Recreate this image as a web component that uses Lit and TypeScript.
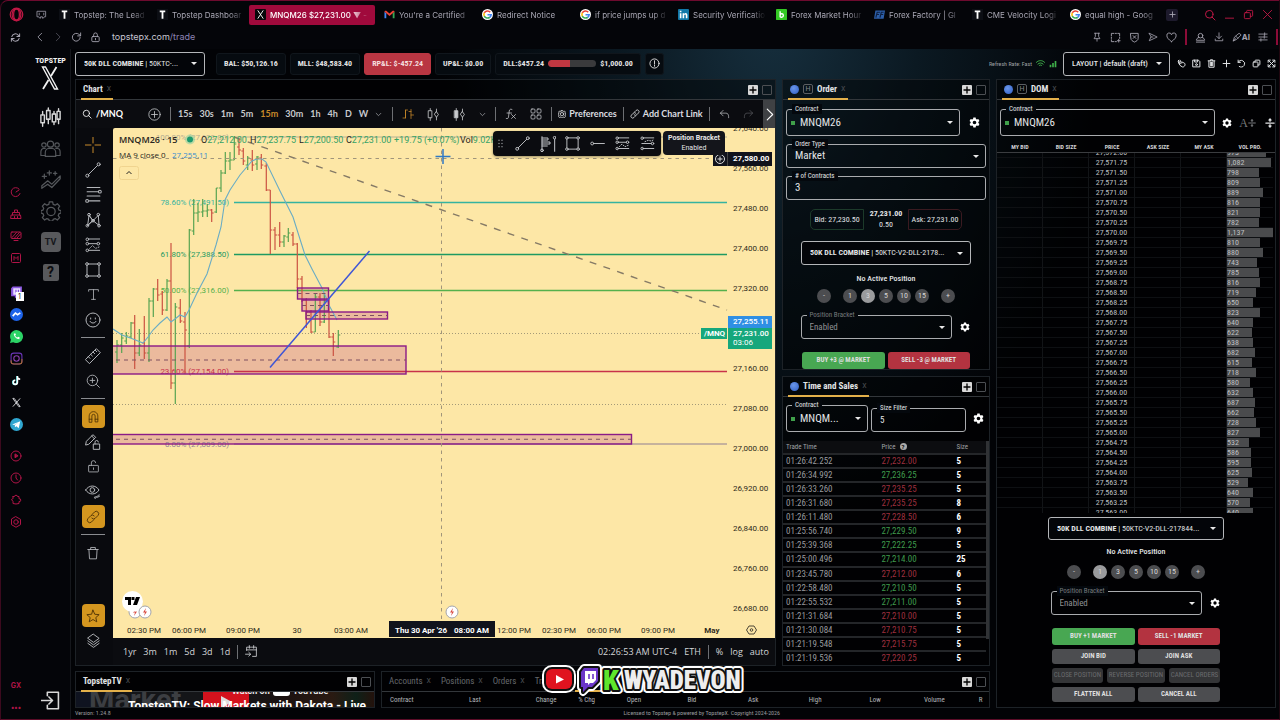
import { LitElement, html, svg, css, nothing, TemplateResult } from "lit";
import { customElement, state } from "lit/decorators.js";
import { classMap } from "lit/directives/class-map.js";

/* ---------- icon set, drawn on a 24 unit grid ---------- */
const ICONS: Record<string, any> = {
  opera: svg`<circle cx="12" cy="12" r="10"/><ellipse cx="12" cy="12" rx="4.6" ry="8.6"/><ellipse cx="12" cy="12" rx="7" ry="9.6"/>`,
  pad: svg`<path d="M3 5h18v12h-3l-2 3h-2v-3h-4v3H8l-2-3H3z"/><path d="M7 9v4M17 9v4"/>`,
  sync: svg`<path d="M4 10a8 8 0 0 1 14-3l3 3M21 4v6h-6M20 14a8 8 0 0 1-14 3l-3-3M3 20v-6h6"/>`,
  back: svg`<path d="M16 3 7 12l9 9"/>`,
  fwd: svg`<path d="m8 3 9 9-9 9"/>`,
  reload: svg`<path d="M20 12a8.5 8.5 0 1 1-3-7l4 3M21 2v6.500h-6.500"/>`,
  lock: svg`<rect x="4" y="10" width="16" height="11" rx="2"/><path d="M8 10V6a4 4 0 0 1 8 0v4M12 14v3"/>`,
  search: svg`<circle cx="10.500" cy="10.500" r="7.500"/><path d="m16 16 6 6"/>`,
  min: svg`<path d="M3 20h18"/>`,
  restore: svg`<rect x="3" y="8" width="13" height="13" rx="2"/><path d="M8 8V5a2 2 0 0 1 2-2h9a2 2 0 0 1 2 2v9a2 2 0 0 1-2 2h-3"/>`,
  close: svg`<path d="m3 3 18 18M21 3 3 21"/>`,
  plus: svg`<path d="M12 3v18M3 12h18"/>`,
  pin: svg`<path d="M6 3h12M8 3v8l-3 5h14l-3-5V3M12 16v6"/>`,
  snap: svg`<path d="M3 8V3h5M11 3h3M17 3h4v5M21 11v3M3 11v3M3 17v4h5M11 21h3M19 16v6M16 19h6"/>`,
  shield: svg`<path d="M4 3h16v11c0 4-4 6-8 8-4-2-8-4-8-8z"/><path d="m9 8 6 6M15 8l-6 6"/>`,
  send: svg`<path d="m3 3 19 9-19 9 4-9zM7 12h5"/>`,
  heart: svg`<path d="M12 21C5 16 2 12 2 8.500A5 5 0 0 1 12 6a5 5 0 0 1 10 2.500C22 12 19 16 12 21z"/>`,
  user: svg`<circle cx="12" cy="8" r="5"/><path d="M8 12c-3 1-5 3-5 6h18c0-3-2-5-5-6M3 22h18"/>`,
  download: svg`<path d="M12 2v13M6 10l6 6 6-6M3 17v4h18v-4"/>`,
  brush: svg`<path d="m3 21 3-9 11-9 5 4-10 10zM9 10l5 5M3 21l6-5"/>`,
  menu: svg`<path d="M2 5h20M2 12h20M2 19h20M16 2v6M7 16v6M15 9v6"/>`,
  gauge: svg`<path d="M20 15a9 9 0 1 1-2-9M12 12l6-4"/>`,
  broom: svg`<path d="M9 9V4h6v5M5 14V9h14v5M3 14h18l1 7H2zM9 17v4M15 17v4"/>`,
  screen: svg`<rect x="2" y="4" width="20" height="13" rx="2"/><path d="m4 15 9-10M9 16 19 5M14 16l7-8M8 21h8"/>`,
  mbox: svg`<rect x="3" y="3" width="18" height="18" rx="2"/><path d="M8 16V9l4 4 4-4v7"/>`,
  play: svg`<circle cx="12" cy="12" r="10"/><path d="M10 8.500v7l5.500-3.500z" fill="currentColor"/>`,
  clock: svg`<circle cx="12" cy="12" r="10"/><path d="M12 6v6l3 4"/>`,
  puzzle: svg`<path d="M6 5h3a3 2.500 0 0 1 6 0h3v4.500a3 2.800 0 1 1 0 5.500v4l-6 1-6-1v-4l-3-4 3-2z"/>`,
  hexgear: svg`<path d="m12 1.500 9 5.200v10.600l-9 5.200-9-5.200V6.700z"/><circle cx="12" cy="12" r="4.500"/>`,
  candles: svg`<rect x="1" y="9" width="4" height="9"/><path d="M3 5v4M3 18v4"/><rect x="7.500" y="4" width="4" height="10"/><path d="M9.500 1v3M9.500 14v5"/><rect x="14" y="8" width="4" height="9"/><path d="M16 5v3M16 17v3"/><rect x="19.500" y="5" width="3.500" height="9"/><path d="M21.200 2v3M21.200 14v5"/>`,
  people: svg`<circle cx="12" cy="7" r="3.500"/><path d="M6 21v-4c0-3 2-5 4-5h4c2 0 4 2 4 5v4z"/><circle cx="4.500" cy="8" r="2.500"/><path d="M6 12H4c-2 0-3 2-3 4v4h5M18 12h2c2 0 3 2 3 4v4h-5"/><circle cx="19.500" cy="8" r="2.500"/>`,
  trend: svg`<path d="m1 19 7-6 5 4L23 7v3.500L13 21l-5-4-7 5z"/><path d="M10 1v5M7.500 3.500h5M4 5v5M1.500 7.500h5M17 2v4M15 4h4"/>`,
  gear: svg`<path d="M10 1h4l.6 3 2.400 1 2.600-1.700 2.800 2.800L20.700 8.700l1 2.300 2.300.5v3l-2.300.6-1 2.400 1.700 2.500-2.800 2.800-2.600-1.700-2.400 1-.6 2H10l-.6-2-2.400-1-2.600 1.700-2.800-2.800L3.300 17.500l-1-2.400L0 14.500v-3l2.300-.5 1-2.300L1.600 6.100l2.800-2.800L7 5l2.400-1z"/><circle cx="12" cy="12.500" r="5"/>`,
  gearFill: svg`<path fill="currentColor" stroke="none" fill-rule="evenodd" d="M9.500 1h5l.7 3.200 2 1.200 3.100-1 2.500 4.300-2.400 2.200v2.300l2.400 2.200-2.500 4.300-3.100-1-2 1.200-.7 3.100h-5l-.7-3.100-2-1.200-3.100 1-2.500-4.300 2.400-2.200v-2.300L1.200 8.700l2.500-4.300 3.100 1 2-1.200zM12 8a4 4 0 1 0 0 8 4 4 0 0 0 0-8z"/>`,
  exit: svg`<path d="M8 6V1.500h14v21H8V18M0 12h14M10 7.500l4.500 4.500-4.500 4.500"/>`,
  addCircle: svg`<circle cx="12" cy="12" r="10.500"/><path d="M12 6.500v11M6.500 12h11"/>`,
  chevDown: svg`<path d="m4 8 8 8 8-8"/>`,
  bars: svg`<path d="M2 20h5V4h4M7 20V4M14 7h4M18 3v18M18 14h5"/>`,
  candle2: svg`<rect x="3" y="5" width="6" height="13"/><path d="M6 1v4M6 18v5"/><path d="m17.500 7 3.500 5-3.500 5-3.500-5zM17.500 2v5M17.500 17v5"/>`,
  candle3: svg`<rect x="3" y="5" width="6" height="13" fill="currentColor"/><path d="M6 1v4M6 18v5"/><path d="m17.500 7 3.500 5-3.500 5-3.500-5zM17.500 2v5M17.500 17v5"/>`,
  fx: svg`<path d="M14 3c-3-1.500-5-.5-5.500 3L7 18c-.5 3-2 4-4.500 3M4 10h9M13 13l8 8M21 13l-8 8"/>`,
  grid4: svg`<rect x="2" y="2" width="8" height="8" rx="2"/><rect x="14" y="2" width="8" height="8" rx="2"/><rect x="2" y="14" width="8" height="8" rx="2"/><rect x="14" y="14" width="8" height="8" rx="2"/>`,
  link: svg`<path d="m10.500 7.500 4-4a4.200 4.200 0 0 1 6 6l-4.500 4.500a4.200 4.200 0 0 1-6 0M13.500 16.500l-4 4a4.200 4.200 0 0 1-6-6L8 10a4.200 4.200 0 0 1 6 0"/>`,
  undo: svg`<path d="M9 3 3 9l6 6M3 9h12c4 0 6 3 6 8v2"/>`,
  redo: svg`<path d="m15 3 6 6-6 6M21 9H9c-4 0-6 3-6 8v2"/>`,
  info: svg`<circle cx="12" cy="12" r="10"/><path d="M12 6v7M12 15.500v2.500"/>`,
  wifi: svg`<path d="M1 9c6-6.500 16-6.500 22 0M5 13.500c4-4 10-4 14 0M9 17.500c2-2 4-2 6 0"/>`,
  signal: svg`<path fill="currentColor" stroke="none" d="M2 14h5v8H2zM9.500 9h5v13h-5zM17 3h5v19h-5z"/>`,
  hand: svg`<path d="M4 4l5 8M8 3l4 8M13 8l5 2c3 1 4 4 3 7s-4 5-7 4l-6-4-3-5M4 4 3 8l4 5"/>`,
  save: svg`<path d="M3 3h14l4 4v14H3z"/><path d="M7 3v5h8V3"/><circle cx="12" cy="15" r="2.500"/>`,
  trash: svg`<path d="M3 6h18M8 6V2.500h8V6M5 6l1 16h12l1-16"/>`,
  trash2: svg`<path d="M3 5h18M9 5V2h6v3M5 5v17h14V5M9 9v9M12 9v9M15 9v9"/>`,
  rotate: svg`<path d="M3 3v6h6M3 9a9 9 0 1 1 3 11"/>`,
  expand: svg`<path d="M3 9V3h6M21 9V3h-6M3 15v6h6M21 15v6h-6M4 4l16 16M20 4 4 20"/>`,
  cross: svg`<path d="M12 0v9M12 15v9M0 12h9M15 12h9"/>`,
  line: svg`<circle cx="3.500" cy="20.500" r="2.300"/><circle cx="20.500" cy="3.500" r="2.300"/><path d="M5.200 18.800 18.800 5.200"/>`,
  fib: svg`<path d="M3 2h18M3 8h16M3 14h18M6 21h15"/><circle cx="21" cy="8" r="2"/><circle cx="3" cy="21" r="2"/>`,
  xabcd: svg`<path d="M4 20 6 5l6 8 8-8 1 15-9-7zM6 5l6 8M4 20l8-7"/><circle cx="3.500" cy="20.500" r="2"/><circle cx="6" cy="4" r="2"/><circle cx="12" cy="13" r="2"/><circle cx="20" cy="4" r="2"/><circle cx="21" cy="20.500" r="2"/>`,
  pos: svg`<path d="M5 3h17M5 10h13M5 20h17"/><circle cx="3.500" cy="3.500" r="2"/><circle cx="3.500" cy="10" r="2"/><circle cx="20" cy="10" r="2"/><circle cx="3.500" cy="20" r="2"/><path stroke-dasharray="1.500 2.500" d="m7 17 4-4 5 4 5-2"/>`,
  pos2: svg`<path d="M5 3h17M3 12h15M5 20h17"/><circle cx="3.500" cy="3.500" r="2"/><circle cx="20" cy="12" r="2"/><circle cx="3.500" cy="20" r="2"/><path stroke-dasharray="1.500 2.500" d="m8 9 5-2 5 1 4-2"/>`,
  rect: svg`<path d="M5 3h14M5 21h14M3 5v14M21 5v14"/><circle cx="3" cy="3" r="2"/><circle cx="21" cy="3" r="2"/><circle cx="3" cy="21" r="2"/><circle cx="21" cy="21" r="2"/>`,
  text: svg`<path d="M3 6V3h18v3M12 3v18M8.500 21h7"/>`,
  smile: svg`<circle cx="12" cy="12" r="10.500"/><path d="M7.500 14c1.500 3.500 7.500 3.500 9 0M8.500 9v1.500M15.500 9v1.500"/>`,
  ruler: svg`<path d="M1 17 17 1l6 6L7 23zM5 13l2.500 2.500M8.500 9.500 11 12M12 6l2.500 2.500M15.500 3.500 17.500 5.500"/>`,
  zoom: svg`<circle cx="11" cy="11" r="9"/><path d="m18 18 5 5M11 7v8M7 11h8"/>`,
  magnet: svg`<path d="M4 22V11a8 8 0 0 1 16 0v11h-5V11a3 3 0 0 0-6 0v11zM4 17h5M15 17h5"/>`,
  penlock: svg`<path d="m1 16 1-5L12 1l4 4L6 15zM10 3l4 4"/><rect x="13" y="15" width="9" height="8"/><path d="M15 15v-2.500a2.500 2.500 0 0 1 5-.5"/>`,
  unlock: svg`<rect x="3" y="10" width="18" height="12" rx="1"/><path d="M8 10V5.500a4 4 0 0 1 8-.5M12 14.500v3"/>`,
  eye: svg`<path d="M1 9c5-8 15-8 20 0-5 8-15 8-20 0z"/><circle cx="11" cy="9" r="3.500"/><path d="m15 22 6-6M14 20l3-1M19 20l3-2"/>`,
  star: svg`<path d="m12 2 3 7 7.500.7-5.700 5 1.700 7.300L12 18l-6.500 4 1.700-7.300-5.700-5L9 9z"/>`,
  layers: svg`<path d="m12 2 9 6.500-9 6.500-9-6.500zM3 12.500l9 6.500 9-6.500M3 16.500l9 6.500 9-6.500"/>`,
  calendar: svg`<path d="M3 10V4h18v17h-7M3 9h18M8 1v5M16 1v5M1 17h9M7 13.500l3.500 3.500L7 20.500"/>`,
  chevR: svg`<path d="m6 2 10 10L6 22"/>`,
  hray: svg`<circle cx="3.500" cy="12" r="2.300"/><path d="M6 12h17"/>`,
  volp: svg`<path d="M3 1v20M3 3h9v3H3M3 9h12v3H3M3 15h8M22 5v18"/><circle cx="22" cy="2.500" r="2"/><circle cx="3" cy="21.500" r="2"/>`,
  drag: svg`<path d="M8 3v1M16 3v1M8 11.500v1M16 11.500v1M8 20v1M16 20v1" stroke-width="2.500"/>`,
  divide: svg`<path d="M2 12h20M12 2v6M12 16v6M9.500 5 12 2l2.500 3M9.500 19l2.500 3 2.500-3" stroke-width="3"/>`,
};

const icon = (name: string, size = 12, sw = 1.5) =>
  html`<svg class="ic" width=${size} height=${size} viewBox="0 0 24 24" fill="none" stroke="currentColor"
    stroke-width=${sw} stroke-linecap="round" stroke-linejoin="round" aria-hidden="true">${ICONS[name]}</svg>`;

/* ---------- coloured brand marks ---------- */
const LOGOS: Record<string, any> = {
  t: svg`<rect width="24" height="24" fill="#0c0e14"/><path d="M6 3h12v4h-4v14h-4V7H6z" fill="#fff"/>`,
  x: svg`<rect width="24" height="24" rx="2" fill="#07070a"/><path d="m6 3 12 18M18 3 6 21" stroke="#fff" stroke-width="2"/>`,
  gmail: svg`<path d="M1 20V6l4 3v11z" fill="#4285f4"/><path d="M19 20V9l4-3v14z" fill="#34a853"/><path d="M1 6c0-2 2-3 4-2l7 6 7-6c2-1 4 0 4 2l-11 9z" fill="#ea4335"/>`,
  google: svg`<circle cx="12" cy="12" r="12" fill="#fff"/><path d="M18 7a8 8 0 0 0-13 1.500" stroke="#ea4335" stroke-width="3.500" fill="none"/><path d="M5 8.500a8 8 0 0 0 0 7" stroke="#fbbc05" stroke-width="3.500" fill="none"/><path d="M5 15.500A8 8 0 0 0 17 18" stroke="#34a853" stroke-width="3.500" fill="none"/><path d="M17 18a8 8 0 0 0 3-5.500h-8" stroke="#4285f4" stroke-width="3.500" fill="none"/>`,
  linkedin: svg`<rect width="24" height="24" rx="2" fill="#1178a8"/><path d="M4 9h3.500v11H4zM4 4h3.500v3H4zM10 9h3.500v2c2-3.500 7-2.500 7 2.500V20H17v-6c0-3-3.500-2.500-3.500 0v6H10z" fill="#fff"/>`,
  b: svg`<rect width="24" height="24" rx="1" fill="#34c924"/><path d="M9 5v13M9 12c2-3 7-2 7 2s-5 5-7 3" stroke="#fff" stroke-width="3" fill="none"/>`,
  ff: svg`<path d="M3 3h21l-3 18H0z" fill="#2c5ea8"/><path d="M4 19 7 7h6M6 12h5M13 19l3-12h5M15 12h5" stroke="#0e2142" stroke-width="2.500" fill="none"/>`,
  twitch: svg`<path d="M2 4 5 1h17v13l-5 5h-4l-4 4v-4H2z" fill="#8c5ae0"/><path d="M6 4h13v9l-3 3H6z" fill="#e8ddff"/><path d="M11 7v5M15.500 7v5" stroke="#7a42d8" stroke-width="2"/>`,
  messenger: svg`<circle cx="12" cy="12" r="12" fill="#1e63e9"/><path d="m5 15 5-5.500 4 3L19 9" stroke="#fff" stroke-width="3" fill="none"/>`,
  whatsapp: svg`<path d="M12 0a12 12 0 1 1-6 22.400L0 24l1.700-6A12 12 0 0 1 12 0z" fill="#2bd366"/><path d="M7 7c0 5 5 10 10 10l1-3-3-1.500-1.500 1.500c-2-1-3-2-4-4L11 8.500 9.500 6z" fill="#fff"/>`,
  insta: svg`<rect x="2" y="2" width="20" height="20" rx="5" fill="none" stroke="#6a35b8" stroke-width="2"/><path d="M2 15v2a5 5 0 0 0 5 5h10a5 5 0 0 0 5-5v-4" fill="none" stroke="#a86a2c" stroke-width="2"/><circle cx="12" cy="12" r="5" fill="none" stroke="#8c3fb0" stroke-width="2"/>`,
  tiktok: svg`<path d="M13 2v14a4.500 4.500 0 1 1-4.500-4.500" stroke="#3ce0e0" stroke-width="3.500" fill="none"/><path d="M14 2v14a4.500 4.500 0 1 1-4.500-4.500M14 3c0 4 3 6 6 6" stroke="#fff" stroke-width="3.500" fill="none"/>`,
  xs: svg`<path d="m4 3 13 18h3L7 3zM20 3 4 21" stroke="#d5d7da" stroke-width="2" fill="none"/>`,
  telegram: svg`<circle cx="12" cy="12" r="12" fill="#2fa6d0"/><path d="m4 12 15-6-3 13-4-4-3 2v-4l7-5-8 5z" fill="#fff"/>`,
};
const logo = (name: string, size = 11) =>
  html`<svg class="ic" width=${size} height=${size} viewBox="0 0 24 24" aria-hidden="true">${LOGOS[name]}</svg>`;

/* ---------- data ---------- */
const TABS: [string, string][] = [
  ["t", "Topstep: The Lead"], ["t", "Topstep Dashboar"], ["x", "MNQM26 $27,231.00 ▼ -"],
  ["gmail", "You're a Certified"], ["google", "Redirect Notice"], ["google", "if price jumps up d"],
  ["linkedin", "Security Verificatio"], ["b", "Forex Market Hour"], ["ff", "Forex Factory | Gl"],
  ["t", "CME Velocity Logi"], ["google", "equal high - Goog"],
];

const TRADES: [string, string, number, boolean][] = [
  ["01:26:42.252", "27,232.00", 5, false], ["01:26:34.992", "27,236.25", 5, true],
  ["01:26:33.260", "27,235.25", 5, false], ["01:26:31.680", "27,235.25", 8, false],
  ["01:26:11.480", "27,228.50", 6, false], ["01:25:56.740", "27,229.50", 9, true],
  ["01:25:39.368", "27,222.25", 5, true], ["01:25:00.496", "27,214.00", 25, true],
  ["01:23:45.780", "27,212.00", 6, false], ["01:22:58.480", "27,210.50", 5, true],
  ["01:22:55.532", "27,211.00", 5, true], ["01:21:31.684", "27,210.00", 5, false],
  ["01:21:30.084", "27,210.75", 5, false], ["01:21:19.548", "27,215.75", 5, false],
  ["01:21:19.536", "27,220.25", 5, false],
];

const VOLUMES = [973, 1082, 798, 809, 889, 816, 821, 782, 1137, 810, 880, 743, 785, 816, 719, 650, 823, 640, 622,
  638, 682, 615, 718, 580, 632, 687, 662, 728, 827, 532, 586, 595, 625, 529, 640, 570, 640];
const fmt = (n: number, d = 0) => n.toLocaleString("en-US", { minimumFractionDigits: d, maximumFractionDigits: d });

const QUOTE_COLS: [string, number][] = [["Contract", 13], ["Last", 11], ["Change", 7], ["% Chg", 8], ["Open", 10],
  ["Bid", 10], ["Ask", 10], ["High", 10], ["Low", 9], ["Volume", 9], ["R", 3]];

/* x, high, low, open, close in plot units; y grows downward */
const BARS: number[][] = [
  [117, 340, 363, 352, 345], [121.7, 333, 353, 345, 338], [126.3, 332, 344, 341, 336], [131, 322, 338, 337, 323],
  [134.7, 315, 369, 323, 353], [139.3, 329, 356, 353, 345], [144.3, 316, 359, 343, 353], [149, 298, 362, 353, 301],
  [153.3, 288, 317, 301, 289], [157.7, 279, 301, 289, 295], [162.3, 291, 315, 294, 310], [167, 279, 311, 310, 281],
  [171, 243, 389, 281, 383], [175.3, 303, 404, 383, 307], [180.3, 299, 323, 308, 321], [185, 312, 373, 322, 330],
  [189.3, 229, 348, 346, 230], [193.7, 199, 235, 231, 213], [198, 203, 222, 213, 212], [202.7, 199, 217, 212, 211],
  [207.3, 204, 217, 211, 210], [211.7, 209, 222, 210, 213], [216.3, 188, 213, 212, 188], [221, 170, 192, 188, 173],
  [225.3, 152, 174, 173, 161], [230, 152, 170, 161, 160], [234.3, 136, 160, 160, 144], [239, 139, 155, 147, 150],
  [243.3, 148, 165, 151, 161], [247.7, 156, 170, 165, 158], [252.3, 150, 171, 160, 165], [257, 156, 170, 164, 157],
  [261.3, 154, 169, 158, 165], [266.3, 163, 191, 166, 190], [270.3, 190, 254, 190, 230], [275, 227, 250, 230, 235],
  [279.7, 222, 247, 235, 242], [284, 235, 247, 242, 236], [288.3, 228, 242, 237, 233], [293, 232, 246, 235, 244],
  [297.3, 243, 288, 244, 279], [302, 276, 302, 279, 300], [306.3, 298, 328, 300, 312], [311, 310, 333, 312, 332],
  [315.3, 294, 332, 332, 297], [320, 293, 326, 297, 322], [324.3, 293, 323, 322, 301], [329, 298, 338, 301, 337],
  [333.3, 333, 356, 337, 342], [338.3, 330, 348, 347, 335],
];

const MA = "113,329 122,335 133,339 143,343 148,337 153,330 160,323 167,317 171,322 175,319 180,315 185,317 189,310 197,293 207,274 216,245 221,227 225,200 230,190 240,175 252,161 257,159 262,159 266,162 280,191 293,217 305,255 312,269 322,288 330,307 337,320";

@customElement("app-root")
export class AppRoot extends LitElement {
  @state() private orderQty = 3;
  @state() private domQty = 1;

  static styles = css`
    :host { display: block; height: 100vh; overflow: hidden; --cond: "Roboto Condensed", "Liberation Sans Narrow", Roboto, sans-serif;
      font-family: var(--cond); font-size: 9px; line-height: 12px; color: #e2e4e6; background: #040509; }
    * { box-sizing: border-box; }
    button, select, input { font: inherit; color: inherit; background: none; border: 0; padding: 0; margin: 0; }
    select { appearance: none; outline: none; min-width: 0; }
    option { color: #000; }
    input { outline: none; min-width: 0; width: 100%; }
    a { color: inherit; text-decoration: none; }
    .ic { display: block; flex: none; }
    .grow { flex: 1; min-width: 0; }
    .window { height: 100%; display: grid; grid-template-rows: 26px 22px minmax(0, 1fr); border: 1px solid #5c0c28; border-top-color: #6d0a2e; border-left-color: #3c0a1e; border-right-color: #20060f; border-radius: 8px 0 0 0; position: relative; }

    /* browser chrome */
    .tabs { display: flex; align-items: center; font: 8px/12px Inter, sans-serif; color: #a9a7b4; padding-top: 1px; }
    .home { width: 52px; flex: none; display: flex; align-items: center; gap: 12px; padding-left: 8px; color: #c01845; }
    .home .pad { color: #8d8b98; }
    .tab { flex: 0 1 98px; min-width: 0; height: 20px; display: flex; align-items: center; gap: 4px; padding: 0 1px 0 6px; overflow: hidden; font-size: 8px; line-height: 12px; }
    .tab span { white-space: nowrap; overflow: hidden; flex: 1; text-align: left; mask-image: linear-gradient(90deg, #000 76%, transparent 96%); }
    .tab.on { flex-basis: 126px; margin-right: 3px; background: #a00a3c; color: #fff; border-radius: 2px; font-weight: 500; }
    .newtab { width: 12px; height: 12px; margin-left: 4px; background: #1d1a2c; border-radius: 2px; display: grid; place-items: center; }
    .wins { margin-left: auto; display: flex; gap: 8px; padding-right: 6px; color: #c01845; }
    .addr { display: flex; align-items: center; color: #a4a2ae; font: 9px/12px Inter, sans-serif; padding-right: 1px; padding-bottom: 2px; }
    .nav { display: flex; gap: 8px; padding-left: 9px; align-items: center; }
    .nav button:first-child { margin-right: 6px; }
    .nav .dim { color: #56545f; }
    .url { margin-left: 11px; color: #c7c5d2; }
    .url i { font-style: normal; color: #8c83b4; }
    .tools { margin-left: auto; display: flex; align-items: center; gap: 8px; }
    .bar { width: 2px; height: 16px; background: #8c0c38; }
    .ai { display: flex; align-items: center; font-weight: 700; font-size: 8px; }

    .shell { display: grid; grid-template-columns: 30px 40px minmax(0, 1fr); min-height: 0; }
    .gx { display: flex; flex-direction: column; align-items: center; padding-top: 132px; color: #b01447; }
    .gx button { height: 22px; display: grid; place-items: center; position: relative; }
    .gx .first { margin-top: 12px; }
    .gx .second { margin-top: 10px; }
    .gx .gap { flex: 1; }
    .gx b { font: 700 7px/10px Inter, sans-serif; }
    .badge { position: absolute; left: 6px; top: 11px; width: 8px; height: 9px; background: #fff; color: #222; font: 7px/9px Inter, sans-serif; }
    .appnav { display: flex; flex-direction: column; align-items: center; border-right: 1px solid #15171c; color: #55585c; padding: 6px 0 6px 0; }
    .appnav .brand { color: #f2f2f2; font: 700 8px/11px var(--cond); text-align: center; margin-bottom: 12px; }
    .appnav .brand svg { display: block; margin: 0 auto; }
    .appnav button { height: 31px; display: grid; place-items: center; }
    .appnav .lit { color: #d8d8d8; }
    .appnav .tv { width: 20px; height: 20px; border-radius: 4px; background: #58595c; color: #15161a; font: 700 9px/20px Roboto, sans-serif; margin: 6px 0 5px; }
    .appnav .help { width: 16px; height: 17px; border-radius: 2px; background: #58595c; color: #0c0d10; font: 700 14px/17px Roboto, sans-serif; margin-top: 7px; }
    .appnav .out { margin-top: auto; color: #d8d8d8; height: 26px; }

    .page { min-width: 0; min-height: 0; display: grid; grid-template-rows: 30px minmax(0, 1fr) 11px; padding: 0 3px 0 4px;
      background: radial-gradient(ellipse 330px 520px at 58% -6%, #17303f 0%, #0b1922 45%, transparent 100%), #020306; }
    .head { display: flex; align-items: center; gap: 4px; font-weight: 700; font-size: 8px; padding-bottom: 1px; }
    .pick { display: grid; align-items: center; border: 1px solid #b4b6b9; border-radius: 3px; height: 24px; background: #030509; min-width: 0; font-size: 8px; }
    .pick > * { grid-area: 1 / 1; min-width: 0; }
    .pick select { opacity: 0; width: 100%; height: 100%; cursor: pointer; }
    .pick .face { display: flex; align-items: center; padding: 0 7px 0 8px; gap: 4px; }
    .pick .name { flex: 1; min-width: 0; overflow: hidden; white-space: nowrap; text-overflow: ellipsis; font-weight: 400; }
    .pick.lay b, .pick.lay .name { font-weight: 500; }
    .pick b { font-weight: 700; }
    .caret { width: 0; height: 0; border: 3px solid transparent; border-top-color: #e8e8e8; border-bottom: 0; flex: none; pointer-events: none; }
    .head .acct { width: 130px; margin-right: 7px; }
    .head .lay { width: 107px; margin: 0 3px 0 2px; }
    .chip { height: 22px; display: flex; align-items: center; justify-content: center; border-radius: 3px; background: #060b10; border: 1px solid #10161c; padding: 0 7px; gap: 4px; white-space: nowrap; color: #e4e4e4; }
    .chip.loss { background: #b93642; border-color: #b93642; color: #f4dede; }
    .chip.round { padding: 0 3px; }
    .meter { width: 48px; height: 7px; border-radius: 4px; background: #3a3a3c; overflow: hidden; }
    .meter i { display: block; height: 100%; background: #c03741; border-radius: 4px 0 0 4px; }
    .refresh { margin-left: auto; font-weight: 400; font-size: 6px; color: #9fa1a4; }
    .green { color: #3fb04a; }
    .acts { display: flex; gap: 6px; }
    .acts button { display: block; }

    .work { display: grid; grid-template-columns: minmax(0, 1fr) 280px; gap: 6px; min-height: 0; }
    .left { display: grid; grid-template-rows: minmax(0, 1fr) 37px; gap: 5px; min-height: 0; min-width: 0; }
    .upper { display: grid; grid-template-columns: minmax(0, 1fr) 208px; gap: 6px; min-height: 0; }
    .lower { display: grid; grid-template-columns: 300px minmax(0, 1fr); gap: 6px; min-height: 0; }
    .side { display: grid; grid-template-rows: 291px minmax(0, 1fr); gap: 6px; min-height: 0; }
    .panel { border: 1px solid #1d2227; min-width: 0; min-height: 0; overflow: hidden; display: flex; flex-direction: column; background: rgba(0, 0, 0, 0.45); }
    .ptabs { height: 20px; flex: none; display: flex; align-items: stretch; border-bottom: 1px solid #33373b; padding: 0 3px 0 5px; gap: 4px; }
    .ptab { display: flex; align-items: center; gap: 4px; font-weight: 700; font-size: 9px; padding: 0 2px; border-bottom: 2px solid #e3b04a; margin-bottom: -1px; white-space: nowrap; }
    .ptab i { font-style: normal; font-weight: 400; font-size: 8px; color: #4b4e52; }
    .ptab .ball { width: 9px; height: 9px; border-radius: 50%; background: radial-gradient(circle at 40% 35%, #6a96ea, #2f5ec4); }
    .ptab .h { width: 10px; height: 10px; border: 1px solid #5c5f63; border-radius: 2px; font: 7px/8px Roboto, sans-serif; color: #85888c; text-align: center; }
    .ptab.off { color: #64676b; font-weight: 400; border-color: transparent; margin-right: 2px; }
    .pbtn { align-self: center; width: 10px; height: 10px; border-radius: 1px; display: grid; place-items: center; background: #d8d8d8; color: #000; }
    .pbtn.sq { background: none; border: 1px solid #4c4f53; }

    /* chart */
    .ctools { height: 28px; flex: none; display: flex; align-items: center; background: #0b0c10; font: 9px/12px Lato, "Open Sans", sans-serif; color: #c8cacd; padding-left: 6px; overflow: hidden; white-space: nowrap; }
    .sym { display: flex; align-items: center; gap: 4px; width: 66px; flex: none; font-weight: 700; color: #fff; }
    .sep { width: 1px; height: 14px; background: #6d6f73; flex: none; }
    .lead { margin-left: 9px; }
    .tf { display: flex; gap: 7px; align-items: center; padding: 0 10px 0 7px; font-weight: 700; flex: none; }
    .tf .on { color: #c98a2a; }
    .amber { color: #c98a2a; }
    .faint { color: #5a5c60; }
    .grp { display: flex; gap: 13px; align-items: center; padding: 0 9px; flex: none; }
    .lab { display: flex; gap: 3px; align-items: center; padding: 0 6px; font-weight: 700; color: #dcdde0; flex: none; }
    .more { margin-left: auto; align-self: stretch; width: 15px; flex: none; background: #3f4144; display: grid; place-items: center; color: #fff; }
    .cbody { flex: 1; min-height: 0; display: grid; grid-template: minmax(0, 1fr) 27px / 37px minmax(0, 1fr); background: #090a0e; }
    .draw { grid-row: 1 / 3; display: flex; flex-direction: column; align-items: center; padding: 4px 3px 12px 0; color: #b4b6ba; min-height: 0; }
    .draw button { height: 25px; width: 25px; flex: none; display: grid; place-items: center; }
    .draw hr { width: 24px; height: 1px; margin: 5px 0; border: 0; background: #8a8c90; flex: none; }
    .draw .hot { height: 23px; width: 23px; margin: 1px; border-radius: 4px; background: #d4961f; color: #4a2f05; }
    .draw .fav { margin-top: auto; }
    .plot { position: relative; background: #fde7a6; min-width: 0; min-height: 0; overflow: hidden; border-radius: 2px 0 0 0; }
    .plot > svg { display: block; width: 100%; height: 100%; }
    .float { position: absolute; top: 3px; right: 114px; width: 168px; height: 25px; border-radius: 4px; background: #0b0c10; display: flex; align-items: center; justify-content: space-between; padding: 0 6px 0 3px; color: #c2c4c8; box-shadow: 0 1px 3px rgba(0, 0, 0, 0.4); }
    .tip { position: absolute; top: 3px; right: 50px; width: 62px; height: 24px; border-radius: 4px; background: #14151b; color: #e6e6e8; text-align: center; font: 7px/10px Roboto, sans-serif; padding-top: 2px; }
    .tip b { display: block; }
    .axis { font: 8px Roboto, sans-serif; fill: #2e2a20; }
    .legend { font: 9px "Open Sans", sans-serif; fill: #272420; }
    .legend .val { font: 9px Roboto, sans-serif; }
    .legend .up { fill: #35a266; }
    .fib { font: 8px Roboto, sans-serif; text-anchor: end; }
    .cfoot { min-width: 0; display: flex; align-items: center; gap: 7px; padding: 0 6px 0 10px; background: #0b0c10; font: 9px/12px "Open Sans", sans-serif; color: #d4d6d9; white-space: nowrap; }
    .cfoot .clk { margin-left: auto; }

    /* fields */
    .field { position: relative; border: 1px solid #a9abae; border-radius: 3px; height: 27px; display: flex; align-items: center; gap: 5px; padding: 0 6px 0 8px; min-width: 0; }
    .field > label { position: absolute; top: -6px; left: 5px; padding: 0 3px; background: #04080d; font-size: 7px; line-height: 10px; font-weight: 400; }
    .field select, .field input { flex: 1; font-size: 11px; line-height: 16px; }
    .field.sym2 { padding-left: 4px; }
    .field .dot { width: 4px; height: 4px; background: #3fa04a; flex: none; }
    .field.dim { color: #8f9194; height: 24px; }
    .field.dim select { font-size: 9px; }
    .field.dim > label { color: #77797c; }
    .form { padding: 9px 3px 0; display: flex; flex-direction: column; gap: 8px; flex: 1; min-height: 0; }
    .row { display: flex; align-items: center; gap: 9px; padding-right: 6px; }
    .row .field { flex: 1; }
    .gearb { color: #fff; }
    .quote { display: grid; grid-template-columns: 54px 38px 54px; justify-content: center; gap: 3px; align-items: center; text-align: center; font-size: 8px; }
    .quote div { line-height: 11px; }
    .quote .bid { height: 21px; line-height: 19px; border: 1px solid #1c3a2a; border-radius: 5px 0 0 5px; white-space: nowrap; }
    .quote .ask { height: 21px; line-height: 19px; border: 1px solid #3a1a20; border-radius: 0 5px 5px 0; white-space: nowrap; }
    .pos { display: flex; flex-direction: column; align-items: center; }
    .form .pos { padding-top: 3px; }
    .pos .pick { width: 170px; }
    .pos .none { margin: 8px 0 4px; font-size: 8px; font-weight: 500; }
    .qty { display: flex; gap: 4px; padding-bottom: 1px; }
    .qty button { width: 14px; height: 14px; border-radius: 50%; background: #4c4d50; color: #d6d6d6; font-size: 8px; line-height: 14px; text-align: center; }
    .qty button.on { background: #9a9b9d; }
    .qty button:first-child { margin-right: 8px; }
    .qty button:last-child { margin-left: 8px; }
    .brk { display: flex; align-items: center; gap: 8px; margin-top: 11px; width: 171px; }
    .brk .field { width: 151px; flex: none; }
    .duo { display: grid; grid-template-columns: 1fr 1fr; gap: 3px; width: 168px; }
    .duo.top { margin-top: 13px; }
    .tri { display: grid; grid-template-columns: 51px 58px 51px; gap: 4px; width: 168px; }
    .btn { height: 17px; border-radius: 3px; background: #4c4d50; font-size: 7px; font-weight: 700; line-height: 17px; text-align: center; color: #dedede; white-space: nowrap; overflow: hidden; }
    .btn.buy { background: #48a752; }
    .btn.sell { background: #b33340; }
    .btn.thin { height: 15px; line-height: 15px; }
    .btn:disabled { background: #343537; color: #6a6b6e; font-weight: 400; font-size: 7px; }

    /* time and sales */
    .filters { display: grid; grid-template-columns: 82px minmax(0, 1fr) 18px; gap: 3px; align-items: end; padding: 8px 2px 9px 3px; }
    .filters .short { height: 24px; }
    .filters .short input { font-size: 9px; }
    .filters .gearb { align-self: center; justify-self: center; }
    .tape { flex: 1; min-height: 0; display: grid; grid-template-columns: minmax(0, 1fr) 3px; }
    .tape table { width: 100%; border-collapse: collapse; table-layout: fixed; }
    .tape th { text-align: left; font-weight: 400; font-size: 7px; line-height: 12px; color: #9fa1a4; background: #0c0d10; padding: 0 0 0 3px; height: 13px; }
    .tape td { height: 14px; padding: 0 0 0 3px; line-height: 12px; font-size: 9px; color: #989a9d; border-top: 2px solid #242629; }
    .tape td.s { color: #fff; font-weight: 700; }
    .tape td.up { color: #3f9a4c; }
    .tape td.dn { color: #9d2f3e; }
    .tape .q { display: inline-block; width: 7px; height: 7px; border-radius: 50%; background: #aaa; color: #000; font: 700 6px/7px Roboto, sans-serif; text-align: center; margin-left: 4px; }
    .thumb { background: #303235; height: 198px; }
    .c-time { width: 47%; }
    .c-price { width: 37%; }

    /* depth ladder */
    .domtop { display: flex; align-items: center; padding: 9px 0 0 3px; }
    .domtop .field { flex: 1; }
    .domtop .gearb { margin: 0 7px; }
    .domtop .aa { display: flex; align-items: center; font: 12px/14px "Liberation Serif", serif; color: #77797c; margin-right: 9px; }
    .ladder { flex: 1; min-height: 0; display: flex; flex-direction: column; margin-top: 6px; }
    .ladder tr { display: grid; grid-template-columns: repeat(6, minmax(0, 1fr)); flex: none; padding-right: 2px; }
    .ladder thead { flex: none; border-bottom: 1px solid #3b3d40; padding: 0; }
    .ladder th { font-size: 6px; line-height: 10px; font-weight: 700; padding: 0; color: #cfd0d2; text-align: center; }
    .ladder tbody { flex: 1; min-height: 0; overflow: hidden; display: flex; flex-direction: column; justify-content: center; }
    .ladder td { height: 10px; line-height: 9px; font-size: 8px; padding: 0; text-align: center; color: #bfc0c3; border-right: 1px solid #121417; border-bottom: 1px solid #0e1013; }
    .ladder td:last-child { text-align: left; border-right: 0; display: grid; }
    .ladder td:last-child > * { grid-area: 1 / 1; }
    .ladder td b { display: block; height: 9px; background: #4a4b4d; }
    .domfoot { flex: none; padding: 4px 0 5px; }
    .domfoot .pick { width: 176px; height: 23px; }
    .domfoot .none { margin: 6px 0 7px; }
    .domfoot .stack { display: flex; flex-direction: column; gap: 4px; }

    /* bottom panels */
    .video { flex: 1; min-height: 0; position: relative; overflow: hidden; background: linear-gradient(90deg, #0f1320 0 14px, #141518 14px 55%, #1c1210 70%, #2a1a12 86%, #0e2018 94%, #24120c); }
    .video .ghost { position: absolute; left: 13px; top: -6px; font: 700 29px/29px Roboto, sans-serif; color: #3c3e42; }
    .video .yt { position: absolute; left: 127px; top: -2px; width: 46px; height: 24px; background: #d3121d; }
    .video .yt svg { display: block; margin: 5px auto; }
    .video .watch { position: absolute; left: 156px; top: -6px; font: 700 9px/10px Roboto, sans-serif; color: #e6e6e6; white-space: nowrap; }
    .video .watch em { display: inline-block; width: 17px; height: 10px; border-radius: 3px; background: #fff; vertical-align: top; margin: 0 3px; }
    .video .title { position: absolute; left: 52px; top: 8px; right: 4px; font: 700 12px/13px Roboto, sans-serif; color: #fff; white-space: nowrap; overflow: hidden; }
    .acc { width: 100%; border-collapse: collapse; table-layout: fixed; }
    .acc th { font-size: 7px; line-height: 16px; font-weight: 400; color: #b4b6b9; text-align: left; padding: 0 0 0 8px; white-space: nowrap; overflow: hidden; }
    .foot { display: flex; justify-content: space-between; font-size: 6px; line-height: 10px; color: #9a9c9f; padding-right: 496px; }
    .stream { position: absolute; left: 536px; bottom: 22px; pointer-events: none; }
    .stream text { font: 900 25px "Roboto Condensed", "Liberation Sans Narrow", Roboto, sans-serif; }
    .stream .big { font-size: 28px; }
  `;

  private caret() { return html`<span class="caret"></span>`; }

  private pick(cls: string, label: string, bold: string, rest: string) {
    return html`<label class="pick ${cls}">
      <span class="face"><span class="name"><b>${bold}</b> | ${rest}</span>${this.caret()}</span>
      <select aria-label=${label}><option>${bold} | ${rest}</option></select>
    </label>`;
  }

  private selectField(id: string, label: string, value: string, cls = "", dot = false) {
    return html`<div class="field ${cls}">
      <label for=${id}>${label}</label>
      ${dot ? html`<span class="dot"></span>` : nothing}
      <select id=${id}><option>${value}</option></select>${this.caret()}
    </div>`;
  }

  private panelTabs(tabs: TemplateResult) {
    return html`<div class="ptabs">${tabs}<span class="grow"></span>
      <button class="pbtn" aria-label="Add tab">${icon("plus", 8, 4)}</button>
      <button class="pbtn sq" aria-label="Maximize"></button></div>`;
  }

  private qty(values: number[], current: number, set: (n: number) => void) {
    return html`<div class="qty"><button @click=${() => set(Math.max(1, current - 1))}>-</button>
      ${values.map((v) => html`<button class=${classMap({ on: v === current })} @click=${() => set(v)}>${v}</button>`)}
      <button @click=${() => set(current + 1)}>+</button></div>`;
  }

  private chrome() {
    return html`
      <div class="tabs">
        <div class="home">${icon("opera", 15, 2)}<span class="pad">${icon("pad", 11, 2)}</span></div>
        ${TABS.map(([l, t], i) => html`<button class=${classMap({ tab: true, on: i === 2 })}>${logo(l)}<span>${t}</span></button>`)}
        <button class="newtab" aria-label="New tab">${icon("plus", 7, 3)}</button>
        <div class="wins">${icon("search", 12, 2)}${icon("min", 11, 2)}${icon("restore", 11, 2)}${icon("close", 11, 2)}</div>
      </div>
      <div class="addr">
        <div class="nav">
          <button aria-label="Sync">${icon("sync", 11, 2.2)}</button><button aria-label="Back">${icon("back", 10, 2)}</button>
          <button class="dim" aria-label="Forward">${icon("fwd", 10, 2)}</button><button aria-label="Reload">${icon("reload", 11, 2)}</button>
          ${icon("lock", 11, 2)}
        </div>
        <span class="url">topstepx.com<i>/trade</i></span>
        <div class="tools">
          ${icon("pin", 10, 2)}${icon("snap", 11, 2)}${icon("shield", 11, 2)}${icon("send", 10, 2)}${icon("heart", 11, 2)}
          <span class="bar"></span>${icon("user", 11, 2)}${icon("download", 10, 2)}
          <span class="ai">${icon("brush", 10, 2)}AI</span>${icon("menu", 10, 2)}<span class="bar"></span>
        </div>
      </div>`;
  }

  private gxBar() {
    return html`<nav class="gx">
      ${["gauge", "broom", "screen", "mbox"].map((n) => html`<button aria-label=${n}>${icon(n, 12, 2)}</button>`)}
      ${["twitch", "messenger", "whatsapp", "insta", "tiktok", "xs", "telegram"].map((n, i) => html`
        <button class=${i ? "" : "first"} aria-label=${n}>${logo(n, n === "xs" || n === "tiktok" ? 11 : 13)}${i ? nothing : html`<span class="badge">1</span>`}</button>`)}
      ${["play", "clock", "puzzle", "hexgear"].map((n, i) => html`<button class=${i ? "" : "second"} aria-label=${n}>${icon(n, 12, 2)}</button>`)}
      <span class="gap"></span><button><b>GX</b></button><button><b>•••</b></button>
    </nav>`;
  }

  private appNav() {
    return html`<nav class="appnav">
      <a class="brand" href="#">TOPSTEP
        <svg width="18" height="24" viewBox="0 0 18 24" fill="none" stroke="#f2f2f2"><path d="m1.500 1 12 22h3L4.500 1z" stroke-width="1.400"/><path d="M15.500 1 10 10M7.500 14 2 23" stroke-width="1.800"/></svg>
      </a>
      <button class="lit" aria-label="Trade">${icon("candles", 21, 1.6)}</button>
      <button aria-label="Community">${icon("people", 21, 1.3)}</button>
      <button aria-label="Stats">${icon("trend", 20, 1.5)}</button>
      <button aria-label="Settings">${icon("gear", 20, 1.5)}</button>
      <button class="tv">TV</button>
      <button class="help">?</button>
      <button class="out" aria-label="Sign out">${icon("exit", 19, 2)}</button>
    </nav>`;
  }

  private header() {
    return html`<header class="head">
      ${this.pick("acct", "Account", "50K DLL COMBINE", "50KTC-...")}
      <span class="chip">BAL: $50,126.16</span><span class="chip">MLL: $48,583.40</span>
      <span class="chip loss">RP&amp;L: $-457.24</span><span class="chip">UP&amp;L: $0.00</span>
      <span class="chip">DLL:$457.24 <span class="meter"><i style="width:46%"></i></span> $1,000.00</span>
      <button class="chip round" aria-label="Info">${icon("info", 11, 2)}</button>
      <span class="refresh">Refresh Rate: Fast</span><span class="green">${icon("wifi", 9, 2.5)}</span><span class="green">${icon("signal", 8)}</span>
      ${this.pick("lay", "Layout", "LAYOUT", "default (draft)")}
      <div class="acts">${["hand", "save", "trash2", "plus", "rotate", "restore", "expand"].map((n) => html`<button aria-label=${n}>${icon(n, 9, 2.6)}</button>`)}</div>
    </header>`;
  }

  private plot() {
    const prices = Array.from({ length: 13 }, (_, i) => 27640 - i * 80);
    const times: [number, string][] = [[144, "02:30 PM"], [189, "06:00 PM"], [243, "09:00 PM"], [297, "30"], [351, "03:00 AM"],
      [514, "12:00 PM"], [559, "02:30 PM"], [604, "06:00 PM"], [658, "09:00 PM"]];
    const fibs: [number, string, string][] = [[137, "100.00% (27,623.00)", "#b5ae92"], [202.5, "78.60% (27,491.50)", "#35b3a0"],
      [254.5, "61.80% (27,388.50)", "#1f9a62"], [290.5, "50.00% (27,316.00)", "#55b04c"], [371.5, "23.60% (27,154.00)", "#c8324a"],
      [444, "0.00% (27,009.00)", "#8f7f93"]];
    const boxes = [[100, 346, 306, 28], [100, 434.5, 531.5, 9.5], [297.5, 288, 31, 11], [302, 300, 26.5, 11], [306, 312, 81.5, 7]];
    const bolt = (x: number, y: number) => svg`<circle cx=${x} cy=${y} r="6" fill="#fff" stroke="#a3a5ad"/><path d="M${x + 1} ${y - 4}l-3 4.500h2l-1 3.500 3-4.500h-2z" fill="#d8483e"/>`;
    return svg`
      <svg viewBox="113 128 662 511" preserveAspectRatio="xMinYMin slice" role="img" aria-label="MNQM26 15 minute chart">
        <path d="M113 333.500H702M113 404.500H727" stroke="#a49a78" stroke-dasharray="1 2"/>
        ${boxes.map(([x, y, w, h]) => svg`<rect x=${x} y=${y} width=${w} height=${h} fill="#c85a8c" fill-opacity=".32"/>`)}
        ${fibs.map(([y, t, c]) => svg`<path d="M234 ${y}H727" stroke=${c} stroke-width=${t[0] === "1" || t[0] === "0" ? 1 : 1.6}/><text class="fib" x="229" y=${y + 2.5} fill=${c}>${t}</text>`)}
        <path d="M234 137 727 310" stroke="#857a66" stroke-width="1.400" stroke-dasharray="7 7.500"/>
        ${BARS.map(([x, h, l, o, c]) => svg`<path d="M${x} ${h}V${l}M${x - 2} ${o}H${x}M${x} ${c}H${x + 2}" stroke=${c < o ? "#57a351" : "#cb5242"} stroke-width="1.200" fill="none"/>`)}
        <polyline points=${MA} fill="none" stroke="#6aacc4" stroke-width="1.100"/>
        ${boxes.map(([x, y, w, h]) => svg`<rect x=${x} y=${y} width=${w} height=${h} fill="none" stroke="#8b1a86" stroke-width="1.400"/>
          <path d="M${x} ${y + h / 2}h${w}" stroke="#7f5060" stroke-dasharray="4 4"/>`)}
        <path d="M270 367.500 369.500 251" stroke="#3f56d6" stroke-width="1.500"/>
        <path d="M113 158.500H713M441.500 128V621" stroke="#a1957a" stroke-dasharray="3.500 4"/>
        <path d="M435.500 156.500h15M443 149v15" stroke="#2f79c4" stroke-width="1.500"/>
        <g class="axis">
          ${prices.map((p, i) => p === 27240 ? nothing : svg`<text x="733" y=${131 + i * 40}>${fmt(p, 2)}</text>`)}
          ${times.map(([x, t]) => svg`<text x=${x} y="633" text-anchor="middle">${t}</text>`)}
          <text x="712" y="633" text-anchor="middle" font-weight="700">May</text>
        </g>
        <path d="m749 626-2.500 4 2.500 4h5l2.500-4-2.500-4z" fill="none" stroke="#4c4636"/><circle cx="751.500" cy="630" r="1.300" fill="none" stroke="#4c4636"/>
        <g fill="#fff" font-family="Roboto, sans-serif" font-size="8">
          <path d="M713 152h59v14h-59z" fill="#11131c"/><path d="M727.500 152v14" stroke="#444"/>
          <circle cx="720" cy="159" r="4.500" fill="none" stroke="#ddd"/><path d="M717.500 159h5M720 156.500v5" stroke="#ddd"/>
          <text x="733" y="161" font-weight="700">27,580.00</text>
          <path d="M728 316h44v12h-44z" fill="#2f8fe4"/><text x="733" y="324" font-weight="500">27,255.11</text>
          <path d="M728 328h44v21h-44zM701 328h26v11h-26z" fill="#16a77c"/>
          <text x="733" y="336" font-weight="500">27,231.00</text><text x="733" y="345">03:06</text><text x="704" y="336" font-weight="700">/MNQ</text>
          <path d="M389 621h106v16H389z" fill="#11131c"/>
          <text x="395" y="633" font-weight="700">Thu 30 Apr '26</text><text x="454" y="633" font-weight="700">08:00 AM</text>
        </g>
        <g class="legend">
          <text x="119" y="143" font-weight="600">MNQM26 · 15</text>
          <circle cx="190" cy="139.500" r="5" fill="#8fd0a4" fill-opacity=".6"/><circle cx="190" cy="139.500" r="3" fill="#1c9a6e"/>
          <text class="val" x="201" y="143">O<tspan class="up">27,212.00</tspan></text><text class="val" x="250" y="143">H<tspan class="up">27,237.75</tspan></text>
          <text class="val" x="299" y="143">L<tspan class="up">27,200.50</tspan></text><text class="val" x="346" y="143">C<tspan class="up">27,231.00</tspan></text>
          <text class="val up" x="394" y="143">+19.75 (+0.07%)</text><text class="val" x="460" y="143">Vol<tspan class="up">9.02K</tspan></text>
          <text x="119" y="158" font-size="8">MA 9 close 0</text><text x="172" y="158" fill="#3b8fd0" font-size="8">27,255.11</text>
        </g>
        <rect x="119.500" y="166.500" width="19" height="13" rx="2" fill="none" stroke="#f0d48f"/><path d="m126.500 174 2.500-2.500 2.500 2.500" fill="none" stroke="#222"/>
        ${bolt(135, 612)}<circle cx="132.500" cy="601.500" r="10.500" fill="#fff"/>
        <path d="M125 597h6v8h-3v-5h-3zM136 597h4l-3 8h-4zM131.500 597h3v3h-3z" fill="#000"/>
        ${bolt(145, 612)}${bolt(452, 612)}
      </svg>`;
  }

  private chart() {
    const d = (n: string, cls = "", s = 16) => html`<button class=${cls} aria-label=${n}>${icon(n, s, 1.5)}</button>`;
    return html`<section class="panel">
      ${this.panelTabs(html`<span class="ptab">Chart <i>X</i></span>`)}
      <div class="ctools">
        <span class="sym">${icon("search", 10, 2)}/MNQ</span>${icon("addCircle", 13, 1.5)}
        <span class="sep lead"></span>
        <div class="tf">${["15s", "30s", "1m", "5m", "15m", "30m", "1h", "4h", "D", "W"].map((t) => html`<button class=${t === "15m" ? "on" : ""}>${t}</button>`)}${icon("chevDown", 7, 2)}</div>
        <span class="sep"></span>
        <div class="grp"><span class="amber">${icon("bars", 12)}</span>${icon("candle2", 13)}${icon("candle3", 13)}${icon("chevDown", 7, 2)}</div>
        <span class="sep"></span><div class="grp">${icon("fx", 12)}${icon("grid4", 12)}</div>
        <span class="sep"></span><button class="lab">${icon("gear", 8, 2.5)}Preferences</button>
        <span class="sep"></span><button class="lab">${icon("link", 10, 2)}Add Chart Link</button>
        <span class="sep"></span><div class="grp">${icon("undo", 11)}<span class="faint">${icon("redo", 11)}</span></div>
        <button class="more" aria-label="More">${icon("chevR", 13, 2)}</button>
      </div>
      <div class="cbody">
        <div class="draw">
          ${d("cross", "amber")}${d("line")}${d("fib", "", 17)}${d("xabcd")}${d("pos")}${d("rect")}${d("text", "", 13)}${d("smile")}<hr>
          ${d("ruler")}${d("zoom", "", 14)}<hr>
          ${d("magnet", "hot", 13)}${d("penlock")}${d("unlock", "", 13)}${d("eye")}${d("link", "hot", 14)}<hr>${d("trash", "", 14)}
          ${d("star", "hot fav", 14)}${d("layers", "", 15)}
        </div>
        <div class="plot">${this.plot()}
          <div class="float">${icon("drag", 9)}${icon("line", 15)}${icon("volp", 16)}${icon("rect", 15)}${icon("hray", 15)}${icon("pos", 15)}${icon("pos2", 15)}</div>
          <div class="tip"><b>Position Bracket</b>Enabled</div>
        </div>
        <div class="cfoot">${["1yr", "3m", "1m", "5d", "3d", "1d"].map((t) => html`<button>${t}</button>`)}
          <span class="sep"></span>${icon("calendar", 13)}
          <span class="clk">02:26:53 AM UTC-4</span><button>ETH</button><span class="sep"></span><button>%</button><button>log</button><button>auto</button></div>
      </div>
    </section>`;
  }

  private order() {
    return html`<section class="panel">
      ${this.panelTabs(html`<span class="ptab"><span class="ball"></span><span class="h">H</span>Order <i>X</i></span>`)}
      <div class="form">
        <div class="row">${this.selectField("oc", "Contract", "MNQM26", "sym2", true)}<button class="gearb" aria-label="Order settings">${icon("gearFill", 11)}</button></div>
        ${this.selectField("ot", "Order Type", "Market")}
        <div class="field"><label for="oq"># of Contracts</label><input id="oq" .value=${String(this.orderQty)}></div>
        <div class="quote"><div class="bid">Bid: 27,230.50</div><div><b>27,231.00</b><br>0.50</div><div class="ask">Ask: 27,231.00</div></div>
        <div class="pos">
          ${this.pick("", "Order account", "50K DLL COMBINE", "50KTC-V2-DLL-2178...")}
          <div class="none">No Active Position</div>
          ${this.qty([1, 3, 5, 10, 15], this.orderQty, (n) => (this.orderQty = n))}
          <div class="brk">${this.selectField("ob", "Position Bracket", "Enabled", "dim")}<button class="gearb" aria-label="Bracket settings">${icon("gearFill", 10)}</button></div>
          <div class="duo top"><button class="btn buy">BUY +${this.orderQty} @ MARKET</button><button class="btn sell">SELL -${this.orderQty} @ MARKET</button></div>
        </div>
      </div>
    </section>`;
  }

  private sales() {
    return html`<section class="panel">
      ${this.panelTabs(html`<span class="ptab"><span class="ball"></span>Time and Sales <i>X</i></span>`)}
      <div class="filters">${this.selectField("tc", "Contract", "MNQM...", "sym2", true)}
        <div class="field short"><label for="sf">Size Filter</label><input id="sf" value="5"></div>
        <button class="gearb" aria-label="Tape settings">${icon("gearFill", 11)}</button></div>
      <div class="tape"><table>
        <colgroup><col class="c-time"><col class="c-price"><col></colgroup>
        <thead><tr><th>Trade Time</th><th>Price<span class="q">?</span></th><th>Size</th></tr></thead>
        <tbody>${TRADES.map(([t, p, s, up]) => html`<tr><td>${t}</td><td class=${up ? "up" : "dn"}>${p}</td><td class="s">${s}</td></tr>`)}</tbody>
      </table><span class="thumb"></span></div>
    </section>`;
  }

  private dom() {
    const max = Math.max(...VOLUMES);
    return html`<section class="panel">
      ${this.panelTabs(html`<span class="ptab"><span class="ball"></span><span class="h">H</span>DOM <i>X</i></span>`)}
      <div class="domtop">${this.selectField("dc", "Contract", "MNQM26", "sym2", true)}
        <button class="gearb" aria-label="DOM settings">${icon("gearFill", 10)}</button>
        <button class="aa" aria-label="Text size">A${icon("divide", 8)}</button><button aria-label="Center">${icon("divide", 10)}</button></div>
      <table class="ladder">
        <thead><tr>${["MY BID", "BID SIZE", "PRICE", "ASK SIZE", "MY ASK", "VOL PRO."].map((h) => html`<th>${h}</th>`)}</tr></thead>
        <tbody>${VOLUMES.map((v, i) => html`<tr><td></td><td></td><td>${fmt(27572 - i * 0.25, 2)}</td><td></td><td></td>
          <td><b style="width:${(v / max) * 100}%"></b><span>${fmt(v)}</span></td></tr>`)}</tbody>
      </table>
      <div class="pos domfoot">
        ${this.pick("", "DOM account", "50K DLL COMBINE", "50KTC-V2-DLL-217844...")}
        <div class="none">No Active Position</div>
        ${this.qty([1, 3, 5, 10, 15], this.domQty, (n) => (this.domQty = n))}
        <div class="brk">${this.selectField("db", "Position Bracket", "Enabled", "dim")}<button class="gearb" aria-label="Bracket settings">${icon("gearFill", 10)}</button></div>
        <div class="stack">
          <div class="duo top"><button class="btn buy">BUY +${this.domQty} MARKET</button><button class="btn sell">SELL -${this.domQty} MARKET</button></div>
          <div class="duo"><button class="btn thin">JOIN BID</button><button class="btn thin">JOIN ASK</button></div>
          <div class="tri"><button class="btn thin" disabled>CLOSE POSITION</button><button class="btn thin" disabled>REVERSE POSITION</button><button class="btn thin" disabled>CANCEL ORDERS</button></div>
          <div class="duo"><button class="btn thin">FLATTEN ALL</button><button class="btn thin">CANCEL ALL</button></div>
        </div>
      </div>
    </section>`;
  }

  private bottom() {
    const off = (t: string) => html`<span class="ptab off">${t} <i>X</i></span>`;
    return html`<div class="lower">
      <section class="panel">${this.panelTabs(html`<span class="ptab">TopstepTV <i>X</i></span>`)}
        <div class="video"><span class="ghost">Market</span><span class="yt"><svg width="12" height="14" viewBox="0 0 12 14"><path d="M1 1v12l11-6z" fill="#ddd"/></svg></span>
          <span class="watch">Watch on<em></em>YouTube</span><span class="title">TopstepTV: Slow Markets with Dakota - Live</span></div>
      </section>
      <section class="panel">${this.panelTabs(html`${off("Accounts")}${off("Positions")}${off("Orders")}${off("Trades")}<span class="ptab">Quotes</span>`)}
        <table class="acc"><colgroup>${QUOTE_COLS.map(([, w]) => html`<col style="width:${w}%">`)}</colgroup>
          <thead><tr>${QUOTE_COLS.map(([h]) => html`<th>${h}</th>`)}</tr></thead></table>
      </section>
    </div>`;
  }

  private streamTag() {
    const word = (stroke: string, w: number) => svg`<g stroke=${stroke} stroke-width=${w} stroke-linejoin="round">
      <rect x="9" y="6" width="26" height="20" rx="6" fill="#e0131f"/><path d="M44 9l3-4h14v13l-6 6h-4l-5 5v-5h-2z" fill="#6a35c8"/>
      <text class="big" x="66" y="27" fill="#5ee62c">K</text><text x="87" y="26" fill="#eee">WYADEVON</text></g>`;
    return html`<svg class="stream" width="212" height="34" viewBox="0 0 212 34">
      ${word("#fff", 8)}${word("#111", 4)}${word("none", 0)}
      <path d="m19 12 8 4.500-8 4z" fill="#fff"/><path d="M48 8h11v9l-3 3h-3l-2 2v-2h-3z" fill="#fff"/><path d="M52 11v5M56 11v5" stroke="#6a35c8" stroke-width="1.600"/>
    </svg>`;
  }

  render() {
    return html`<div class="window">
      ${this.chrome()}
      <div class="shell">${this.gxBar()}${this.appNav()}
        <main class="page">${this.header()}
          <div class="work"><div class="left"><div class="upper">${this.chart()}<div class="side">${this.order()}${this.sales()}</div></div>${this.bottom()}</div>${this.dom()}</div>
          <footer class="foot"><span>Version: 1.24.8</span><span>Licensed to Topstep &amp; powered by TopstepX. Copyright 2024-2026</span></footer>
        </main>
      </div>
      ${this.streamTag()}
    </div>`;
  }
}
